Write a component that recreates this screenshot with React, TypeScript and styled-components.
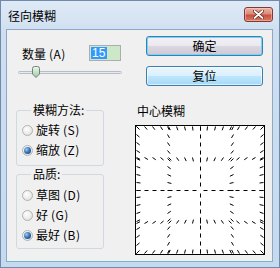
import styled, { createGlobalStyle } from "styled-components";

const FONT = `"Noto Sans CJK SC", "Liberation Sans", sans-serif`;

const GlobalStyle = createGlobalStyle`
  html, body {
    margin: 0;
    padding: 0;
    background: #ffffff;
  }
  body {
    font-family: ${FONT};
  }
`;

// preview grid: short strokes on 5 lines each way, all aimed at the centre
const SIZE = 128;
const CENTER = 64;
const GUIDES = [0, 31, 64, 97, 127];

const buildStrokes = () => {
  const strokes: { x1: number; y1: number; x2: number; y2: number }[] = [];
  const steps = 16;
  const add = (px: number, py: number) => {
    const dx = CENTER - px;
    const dy = CENTER - py;
    const len = Math.hypot(dx, dy);
    if (len < 1) return;
    const ux = dx / len;
    const uy = dy / len;
    strokes.push({
      x1: px + 0.5,
      y1: py + 0.5,
      x2: px + 0.5 + ux * 4,
      y2: py + 0.5 + uy * 4,
    });
  };
  GUIDES.forEach((g) => {
    for (let i = 0; i <= steps; i++) {
      const t = Math.round((i * (SIZE - 1)) / steps);
      add(t, g);
      add(g, t);
    }
  });
  return strokes;
};

const strokes = buildStrokes();

const amount = { value: 15, min: 1, max: 100 };

export default function App() {
  const thumbLeft =
    2 + ((amount.value - amount.min) / (amount.max - amount.min)) * 96;

  return (
    <>
      <GlobalStyle />
      <Window>
        <TitleBar>
          <Title>径向模糊</Title>
          <CloseButton aria-label="关闭">
            <svg width="11" height="9" viewBox="0 0 11 9">
              <path
                d="M1.5 1 L9.5 8 M9.5 1 L1.5 8"
                stroke="#5a1d16"
                strokeWidth="3.2"
                strokeLinecap="round"
              />
              <path
                d="M1.5 1 L9.5 8 M9.5 1 L1.5 8"
                stroke="#ffffff"
                strokeWidth="1.8"
                strokeLinecap="round"
              />
            </svg>
          </CloseButton>
        </TitleBar>

        <Client>
          <LeftColumn>
            <AmountRow>
              <FieldLabel>
                数量<Hotkey>(A)</Hotkey>
              </FieldLabel>
              <NumberField>
                <Selection>15</Selection>
              </NumberField>
            </AmountRow>

            <Slider>
              <Track />
              <Thumb style={{ left: thumbLeft }}>
                <svg width="8" height="12" viewBox="0 0 8 12">
                  <defs>
                    <linearGradient id="thumbFill" x1="0" y1="0" x2="0" y2="1">
                      <stop offset="0" stopColor="#eef7ee" />
                      <stop offset="1" stopColor="#9ccc9e" />
                    </linearGradient>
                  </defs>
                  <path
                    d="M0.5 2.5 Q0.5 0.5 2.5 0.5 H5.5 Q7.5 0.5 7.5 2.5 V8 L4 11.5 L0.5 8 Z"
                    fill="url(#thumbFill)"
                    stroke="#6f8477"
                  />
                </svg>
              </Thumb>
            </Slider>

            <Group $top={26} $padTop={4} $padBottom={5}>
              <Legend>模糊方法:</Legend>
              <RadioRow>
                <RadioDot />
                <RadioText>
                  旋转<Hotkey>(S)</Hotkey>
                </RadioText>
              </RadioRow>
              <RadioRow>
                <RadioDot $checked />
                <RadioText>
                  缩放<Hotkey>(Z)</Hotkey>
                </RadioText>
              </RadioRow>
            </Group>

            <Group $top={2} $padTop={5} $padBottom={3}>
              <Legend>品质:</Legend>
              <RadioRow>
                <RadioDot />
                <RadioText>
                  草图<Hotkey>(D)</Hotkey>
                </RadioText>
              </RadioRow>
              <RadioRow>
                <RadioDot />
                <RadioText>
                  好<Hotkey>(G)</Hotkey>
                </RadioText>
              </RadioRow>
              <RadioRow>
                <RadioDot $checked />
                <RadioText>
                  最好<Hotkey>(B)</Hotkey>
                </RadioText>
              </RadioRow>
            </Group>
          </LeftColumn>

          <RightColumn>
            <DialogButton $variant="default">确定</DialogButton>
            <DialogButton $variant="hot">复位</DialogButton>
            <PreviewLabel>中心模糊</PreviewLabel>
            <PreviewBox>
              <svg width={SIZE} height={SIZE} viewBox={`0 0 ${SIZE} ${SIZE}`}>
                {strokes.map((s, i) => (
                  <line
                    key={i}
                    x1={s.x1}
                    y1={s.y1}
                    x2={s.x2}
                    y2={s.y2}
                    stroke="#000000"
                    strokeWidth="1"
                  />
                ))}
              </svg>
            </PreviewBox>
          </RightColumn>
        </Client>
      </Window>
    </>
  );
}

const Window = styled.div`
  width: 280px;
  height: 268px;
  box-sizing: border-box;
  border: 1px solid #6f8bab;
  display: flex;
  flex-direction: column;
  background: linear-gradient(180deg, #dfeaf6 0%, #cfdff0 12%, #c6d9ee 100%);
  overflow: hidden;
`;

const TitleBar = styled.div`
  flex: none;
  height: 28px;
  display: flex;
  justify-content: space-between;
  align-items: flex-start;
  padding: 0 6px 0 7px;
`;

const Title = styled.div`
  margin-top: 8px;
  font-family: ${FONT};
  font-size: 12px;
  line-height: 13px;
  color: #000000;
`;

const CloseButton = styled.button`
  margin-top: 6px;
  width: 29px;
  height: 15px;
  padding: 0;
  box-sizing: border-box;
  border: 1px solid #7e3a33;
  border-radius: 3px;
  background: linear-gradient(
    180deg,
    #eab3a6 0%,
    #dc8a7a 45%,
    #c9503f 55%,
    #d87a62 100%
  );
  box-shadow: inset 0 0 0 1px rgba(255, 220, 210, 0.45);
  display: flex;
  align-items: center;
  justify-content: center;
`;

const Client = styled.div`
  flex: 1;
  margin: 0 6px 5px 5px;
  border: 1px solid #8ea8c6;
  border-bottom-color: #6fb9cc;
  background: #f0f0f0;
  display: grid;
  grid-template-columns: 106px 130px;
  column-gap: 13px;
  padding-left: 9px;
  align-items: start;
  font-family: ${FONT};
  font-size: 12px;
  color: #000000;
`;

const LeftColumn = styled.div`
  display: flex;
  flex-direction: column;
`;

const AmountRow = styled.div`
  margin-top: 15px;
  height: 16px;
  display: flex;
  align-items: center;
  justify-content: space-between;
  padding: 0 1px 0 6px;
`;

const FieldLabel = styled.span`
  font-size: 12px;
  line-height: 12px;
  margin-top: 2px;
`;

const Hotkey = styled.span`
  margin-left: 3px;
  letter-spacing: 0.5px;
`;

const NumberField = styled.div`
  width: 32px;
  height: 16px;
  box-sizing: border-box;
  border: 1px solid #abadb3;
  background: #cce8c6;
  padding: 1px;
  display: flex;
`;

const Selection = styled.span`
  width: 15px;
  background: #3399ff;
  color: #ffffff;
  font-family: "Liberation Sans", sans-serif;
  font-size: 12px;
  line-height: 12px;
  text-align: left;
  padding-left: 1px;
`;

const Slider = styled.div`
  position: relative;
  margin-top: 5px;
  height: 12px;
  display: flex;
  align-items: center;
`;

const Track = styled.div`
  margin-left: 2px;
  flex: 1;
  height: 3px;
  box-sizing: border-box;
  border: 1px solid #b9bec6;
  border-radius: 2px;
  background: #e8ebee;
`;

const Thumb = styled.span`
  position: absolute;
  top: 0;
  width: 8px;
  height: 12px;
  display: flex;
`;

const Group = styled.fieldset<{ $top: number; $padTop: number; $padBottom: number }>`
  margin: ${(p) => p.$top}px 0 0 0;
  width: 88px;
  box-sizing: border-box;
  min-width: 0;
  border: 1px solid #d0d9df;
  border-radius: 3px;
  padding: ${(p) => p.$padTop}px 0 ${(p) => p.$padBottom}px 5px;
`;

const Legend = styled.legend`
  margin-left: 9px;
  padding: 0 2px;
  font-size: 12px;
  line-height: 12px;
  color: #000000;
`;

const RadioRow = styled.div`
  height: 20px;
  display: flex;
  align-items: center;
  gap: 3px;
`;

const RadioDot = styled.span<{ $checked?: boolean }>`
  flex: none;
  width: 11px;
  height: 11px;
  box-sizing: border-box;
  border-radius: 50%;
  border: 1px solid #b3b3b3;
  background: radial-gradient(circle at 40% 35%, #ffffff 0%, #ececec 55%, #d4d4d4 100%);
  display: flex;
  align-items: center;
  justify-content: center;

  &::after {
    content: "";
    display: ${(p) => (p.$checked ? "block" : "none")};
    width: 7px;
    height: 7px;
    border-radius: 50%;
    background: radial-gradient(circle at 35% 35%, #9ccbf2 0%, #2a69b0 55%, #133f73 100%);
  }
`;

const RadioText = styled.span`
  font-size: 12px;
  line-height: 12px;
`;

const RightColumn = styled.div`
  display: flex;
  flex-direction: column;
`;

const DialogButton = styled.button<{ $variant: "default" | "hot" }>`
  margin: ${(p) => (p.$variant === "default" ? 6 : 10)}px 0 0 11px;
  width: 117px;
  height: 20px;
  padding: 0;
  box-sizing: border-box;
  border: 1px solid #3c7fb1;
  border-radius: 3px;
  font-family: ${FONT};
  font-size: 12px;
  line-height: 12px;
  color: #000000;
  background: ${(p) =>
    p.$variant === "default"
      ? "linear-gradient(180deg, #f3f1f6 0%, #ebe8ef 50%, #dcd8e2 50%, #cfcad6 100%)"
      : "linear-gradient(180deg, #eaf6fd 0%, #d9f0fc 50%, #bee6fd 50%, #a7d9f5 100%)"};
  box-shadow: ${(p) =>
    p.$variant === "default" ? "inset 0 0 0 1px #6fd6f5" : "inset 0 0 0 1px rgba(255,255,255,0.6)"};
`;

const PreviewLabel = styled.div`
  margin-top: 19px;
  padding-left: 2px;
  font-size: 12px;
  line-height: 12px;
`;

const PreviewBox = styled.div`
  margin-top: 8px;
  width: 130px;
  height: 130px;
  box-sizing: border-box;
  border: 1px solid #000000;
  background: #ffffff;
  display: flex;
`;
